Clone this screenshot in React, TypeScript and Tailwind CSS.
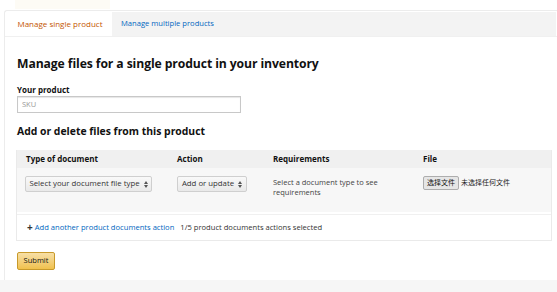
import React from "react";

const Updown = () => (
  <svg width="4" height="7" viewBox="0 0 4 7" className="ml-[4px]">
    <path d="M0 3 L2 0 L4 3 Z M0 4 L2 7 L4 4 Z" fill="#555" />
  </svg>
);

export default function App() {
  return (
    <div
      className="w-[557px] h-[292px] bg-white overflow-hidden relative text-[#111]"
      style={{ fontFamily: '"Open Sans", "Noto Sans CJK SC", sans-serif' }}
    >
      <div className="h-[10px] flex">
        <div className="ml-[15px] w-[95px] h-[9px] bg-[#fdfbf5]" />
      </div>
      <div className="ml-[4px] h-[270px] border-l border-t border-[#ececec] rounded-tl-[3px] flex flex-col">
        {/* tabs */}
        <div className="flex h-[25px] mt-[1px] border-b border-[#f0f0f0]">
          <div className="w-[104px] ml-[3px] flex items-center justify-center text-[8px] text-[#c45500] bg-white">
            Manage single product
          </div>
          <div className="flex-1 bg-[#f3f3f3] flex items-center pl-[9px] text-[7.6px] text-[#0066c0] mr-[1px]">
            Manage multiple products
          </div>
        </div>
        <div className="pl-[12px] pr-[1px]">
          <h1 className="mt-[19px] text-[12.2px] font-bold leading-[16px] tracking-[-0.1px]">
            Manage files for a single product in your inventory
          </h1>
          <div className="mt-[13px] text-[8px] font-bold leading-[10px]">Your product</div>
          <div className="mt-[1px] w-[224px] h-[17px] border border-[#c8c8c8] bg-white flex items-center pl-[4px] text-[7.5px] text-[#999] shadow-[inset_0_1px_1px_rgba(0,0,0,0.1)]">
            SKU
          </div>
          <h2 className="mt-[11px] text-[10.4px] font-bold leading-[14px]">
            Add or delete files from this product
          </h2>
          <div className="mt-[12px] ml-[-1px] w-[536px] border border-[#eaeaea] border-t-0">
            <div className="grid grid-cols-[151px_96px_150px_1fr] h-[18px] items-center bg-[#f0f0f0] pl-[9px] text-[8px] font-bold">
              <div>Type of document</div>
              <div>Action</div>
              <div>Requirements</div>
              <div>File</div>
            </div>
            <div className="grid grid-cols-[152px_96px_150px_1fr] h-[44px] bg-[#f7f7f7] pl-[8px] pt-[8px] text-[7.8px]">
              <div>
                <div className="w-[127px] h-[16px] border border-[#cfcfcf] rounded-[2px] bg-gradient-to-b from-[#f9f9f9] to-[#e9e9e9] flex items-center justify-center text-[#333]">
                  Select your document file type <Updown />
                </div>
              </div>
              <div>
                <div className="w-[70px] h-[16px] border border-[#cfcfcf] rounded-[2px] bg-gradient-to-b from-[#f9f9f9] to-[#e9e9e9] flex items-center justify-center text-[#333]">
                  Add or update <Updown />
                </div>
              </div>
              <div className="leading-[10px] pt-[1px] text-[7.5px] text-[#444]">
                Select a document type to see
                <br />
                requirements
              </div>
              <div className="flex items-start">
                <div className="h-[14px] px-[3px] border border-[#adadad] rounded-[2px] bg-[#e6e6e6] flex items-center text-[7px]">
                  选择文件
                </div>
                <div className="ml-[2px] h-[14px] flex items-center text-[7px] text-[#222]">未选择任何文件</div>
              </div>
            </div>
            <div className="h-[2px] bg-white" />
            <div className="h-[26px] bg-white flex items-center pl-[10px] text-[7.6px] border-t border-[#f0f0f0]">
              <span className="text-[#0066c0] flex items-center">
                <span className="font-bold text-[10px] text-[#333] mr-[2px] leading-none">+</span>
                Add another product documents action
              </span>
              <span className="ml-[6px] text-[#333]">1/5 product documents actions selected</span>
            </div>
          </div>
          <div className="mt-[11px] w-[38px] h-[18px] rounded-[2px] border border-[#c89a2b] bg-gradient-to-b from-[#f7dfa5] to-[#f0c14b] flex items-center justify-center text-[7.5px] text-[#111]">
            Submit
          </div>
        </div>
      </div>
      <div className="h-[12px] bg-[#f6f6f6]" />
    </div>
  );
}
